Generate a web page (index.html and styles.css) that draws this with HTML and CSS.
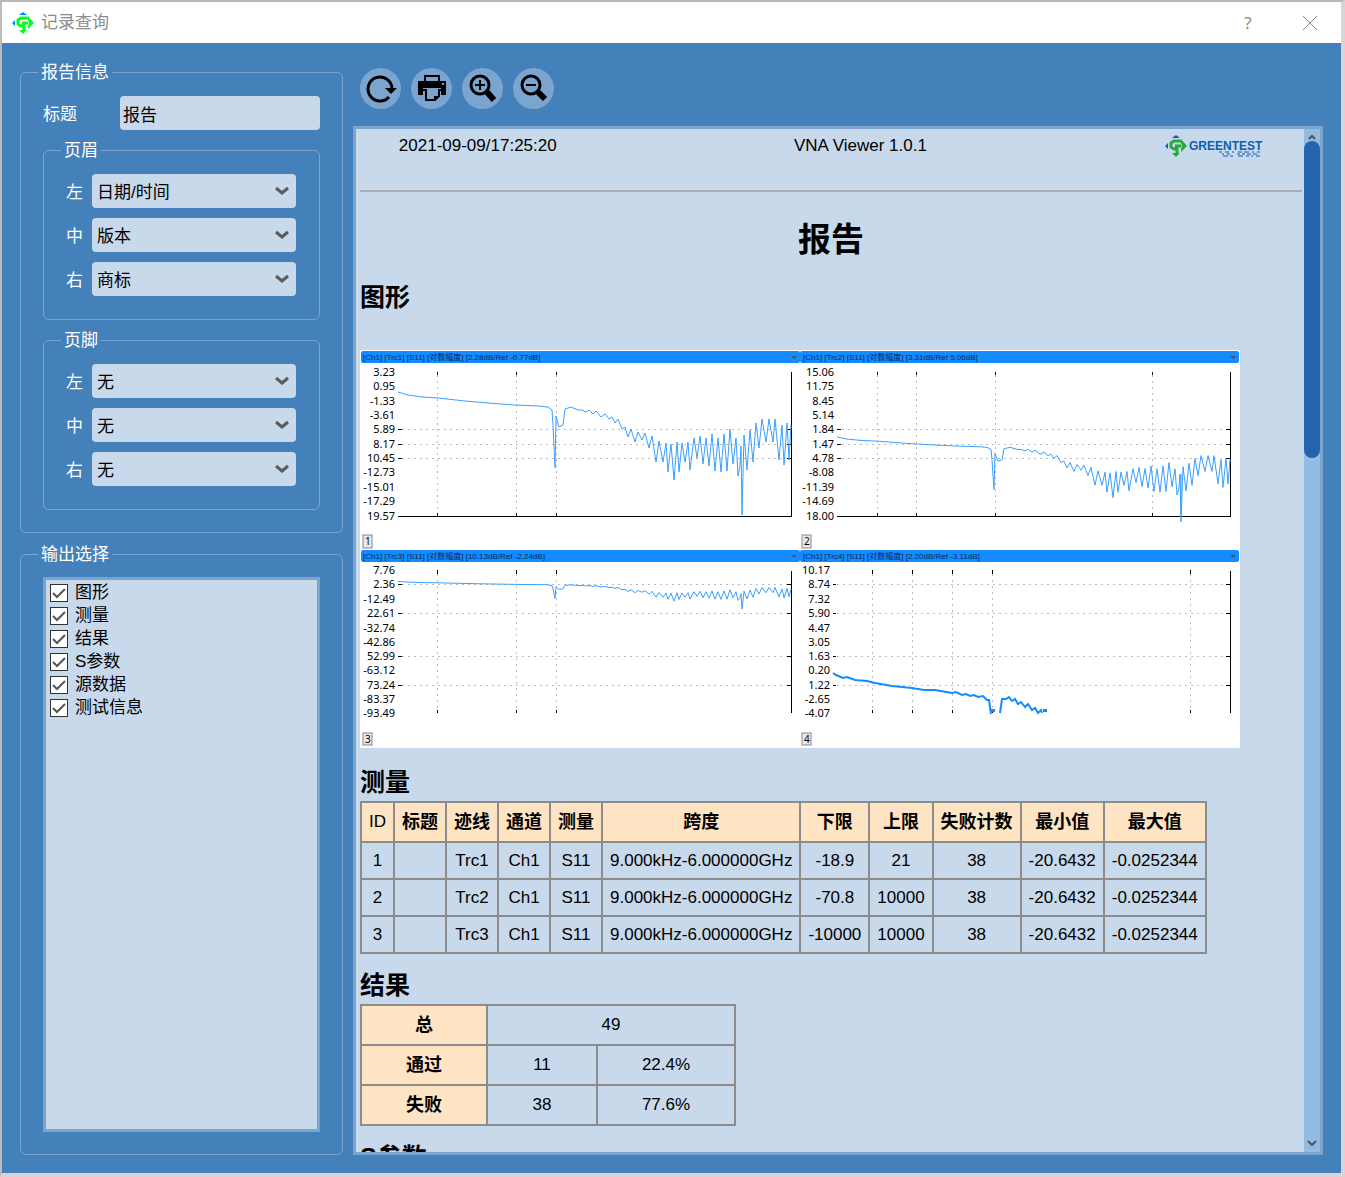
FILE: index.html
```html
<!DOCTYPE html>
<html lang="zh-CN">
<head>
<meta charset="utf-8">
<meta name="viewport" content="width=device-width, initial-scale=1">
<title>记录查询</title>
<link rel="stylesheet" href="styles.css">
</head>
<body>
<svg class="defs" aria-hidden="true">
  <defs>
    <symbol id="brand-mark" viewBox="0 0 22 22">
      <path class="brand-blue" d="M11 0l4 3H7zM0 11l3-3v6z"/>
      <path class="brand-line" d="M16 6H9L6 8v4l3 2h3v4M10 11h6"/>
      <path class="brand-green" d="M16 4l6 7-6 6v-3l1-3-1-3zM7 18h8l-4 4z"/>
    </symbol>
    <path id="trace" vector-effect="non-scaling-stroke" d="M38 42L48 45 62 47 78 48 105 51 128 53 155 55 178 56 188 57 192 60 193 75 195 118 196 66 199 77 203 75 205 59 211 57 218 60 222 60 226 62 229 60 233 64 236 61 241 67 245 64 249 69 252 67 255 73 258 69 262 79 265 77 268 87 271 79 275 92 278 82 282 90 285 83 289 98 292 86 296 112 299 91 303 112 306 93 308 122 311 94 314 130 317 92 319 122 322 93 325 112 328 92 330 120 334 88 337 108 340 86 343 114 346 88 349 116 352 84 355 121 358 88 361 122 364 84 367 121 370 79 373 114 376 88 378 126 380 116 381 96 382 165 384 85 387 120 390 80 393 112 396 73 399 98 402 69 406 92 409 69 413 92 415 69 419 110 422 75 424 115 427 73 429 110 431 75"/>
  </defs>
</svg>

<div class="window">
  <header class="titlebar">
    <svg class="titlebar-icon bright" aria-hidden="true"><use href="#brand-mark"/></svg>
    <span class="titlebar-text">记录查询</span>
    <button class="titlebar-button" type="button" aria-label="帮助">?</button>
    <button class="titlebar-button" type="button" aria-label="关闭">
      <svg width="16" height="16" viewBox="0 0 16 16"><path d="M1 1l14 14M15 1L1 15"/></svg>
    </button>
  </header>

  <main class="main">
    <form class="sidebar">
      <fieldset class="group info">
        <legend>报告信息</legend>
        <div class="title-row">
          <label for="title">标题</label>
          <input class="control" id="title" type="text" value="报告">
        </div>
        <fieldset class="group slots">
          <legend>页眉</legend>
          <div class="slot"><label for="hl">左</label><select class="control" id="hl"><option>日期/时间</option></select></div>
          <div class="slot"><label for="hc">中</label><select class="control" id="hc"><option>版本</option></select></div>
          <div class="slot"><label for="hr">右</label><select class="control" id="hr"><option>商标</option></select></div>
        </fieldset>
        <fieldset class="group slots">
          <legend>页脚</legend>
          <div class="slot"><label for="fl">左</label><select class="control" id="fl"><option>无</option></select></div>
          <div class="slot"><label for="fc">中</label><select class="control" id="fc"><option>无</option></select></div>
          <div class="slot"><label for="fr">右</label><select class="control" id="fr"><option>无</option></select></div>
        </fieldset>
      </fieldset>

      <fieldset class="group output">
        <legend>输出选择</legend>
        <div class="checklist">
          <label><input type="checkbox" checked>图形</label>
          <label><input type="checkbox" checked>测量</label>
          <label><input type="checkbox" checked>结果</label>
          <label><input type="checkbox" checked>S参数</label>
          <label><input type="checkbox" checked>源数据</label>
          <label><input type="checkbox" checked>测试信息</label>
        </div>
      </fieldset>
    </form>

    <section class="preview">
      <div class="toolbar">
        <button class="tool" type="button" aria-label="刷新">
          <svg viewBox="0 0 41 41"><path class="ring" d="M29 29A12 12 0 1 1 32 20"/><path d="M25 20h12l-6 6z"/></svg>
        </button>
        <button class="tool" type="button" aria-label="打印">
          <svg viewBox="0 0 41 41"><path class="thin" d="M14 14V8h14v6"/><path d="M7 13h28v14h-5v-7H12v7H7z"/><path class="thin" d="M12 22h3v10h9l4-4v-6h3"/><path d="M23 33v-5h6z"/><path class="pale" d="M31 15h2v2h-2z"/></svg>
        </button>
        <button class="tool" type="button" aria-label="放大">
          <svg viewBox="0 0 41 41"><circle class="ring" cx="18" cy="17" r="9"/><path class="cross" d="M13 17h10M18 12v10"/><path class="handle" d="M25 24l7 8"/></svg>
        </button>
        <button class="tool" type="button" aria-label="缩小">
          <svg viewBox="0 0 41 41"><circle class="ring" cx="18" cy="17" r="9"/><path class="cross" d="M13 17h10"/><path class="handle" d="M25 24l7 7"/></svg>
        </button>
      </div>

      <div class="report-frame">
        <article class="report">
          <header class="report-head">
            <span>2021-09-09/17:25:20</span>
            <span>VNA Viewer 1.0.1</span>
            <svg class="logo" width="98" height="24" viewBox="0 0 98 24" role="img" aria-label="GREENTEST">
              <use href="#brand-mark" x="0" y="1" width="22" height="22"/>
              <text class="logo-text" x="24" y="16">GREENTEST</text>
              <path class="logo-sub" d="M54 18h3M60 18h4M67 18h2M73 18h4M79 18h5M87 18h2M92 18h3M57 20h2M62 20h3M72 20h3M77 20h3M82 20h4M88 20h4M58 22h5M65 22h3M73 22h5M81 22h3M86 22h2M91 22h4"/>
            </svg>
          </header>
          <h1>报告</h1>
          <h2>图形</h2>
          <div class="charts">
            <svg class="chart" viewBox="0 0 440 199" role="img" aria-label="Trc1">
              <rect class="bar" x="1" y="1" width="439" height="12" rx="2"/>
              <text class="caption" x="3" y="10">[Ch1] [Trc1] [S11] [对数幅度] [2.28dB/Ref -0.77dB]</text>
              <path class="menu" d="M431 6h6l-3 3z"/>
              <path class="grid" d="M77 25V164M156 25V164M196 25V164M42 79H428M42 94H428M42 108H428"/>
              <path class="axis" d="M38 166H431M431 22V167M77 22v3M156 22v3M196 22v3M77 163v3M156 163v3M196 163v3M38 79h4M38 94h4M38 108h4M427 79h4M427 94h4M427 108h4"/>
              <text class="scale"><tspan x="35" y="26">3.23</tspan><tspan x="35" y="40">0.95</tspan><tspan x="35" y="55">-1.33</tspan><tspan x="35" y="69">-3.61</tspan><tspan x="35" y="83">5.89</tspan><tspan x="35" y="98">8.17</tspan><tspan x="35" y="112">10.45</tspan><tspan x="35" y="126">-12.73</tspan><tspan x="35" y="141">-15.01</tspan><tspan x="35" y="155">-17.29</tspan><tspan x="35" y="170">19.57</tspan></text>
              <use class="trace" href="#trace"/>
              <rect class="tag" x="3" y="185" width="9" height="13"/><text class="tag-text" x="5" y="195">1</text>
            </svg>
            <svg class="chart" viewBox="0 0 440 199" role="img" aria-label="Trc2">
              <rect class="bar" x="0" y="1" width="439" height="12" rx="2"/>
              <text class="caption" x="3" y="10">[Ch1] [Trc2] [S11] [对数幅度] [3.31dB/Ref 5.06dB]</text>
              <path class="menu" d="M430 6h6l-3 3z"/>
              <path class="grid" d="M77 25V164M116 25V164M195 25V164M352 25V164M42 79H428M42 94H428M42 108H428"/>
              <path class="axis" d="M37 166H430M430 22V167M77 22v3M116 22v3M195 22v3M352 22v3M77 163v3M116 163v3M195 163v3M352 163v3M37 79h4M37 94h4M37 108h4M426 79h4M426 94h4M426 108h4"/>
              <text class="scale"><tspan x="34" y="26">15.06</tspan><tspan x="34" y="40">11.75</tspan><tspan x="34" y="55">8.45</tspan><tspan x="34" y="69">5.14</tspan><tspan x="34" y="83">1.84</tspan><tspan x="34" y="98">1.47</tspan><tspan x="34" y="112">4.78</tspan><tspan x="34" y="126">-8.08</tspan><tspan x="34" y="141">-11.39</tspan><tspan x="34" y="155">-14.69</tspan><tspan x="34" y="170">18.00</tspan></text>
              <use class="trace" href="#trace" transform="translate(-1 58) scale(1 .69)"/>
              <path class="trace" d="M381 124V165"/>
              <rect class="tag" x="2" y="185" width="9" height="13"/><text class="tag-text" x="4" y="195">2</text>
            </svg>
            <svg class="chart" viewBox="0 0 440 199" role="img" aria-label="Trc3">
              <rect class="bar" x="1" y="1" width="439" height="12" rx="2"/>
              <text class="caption" x="3" y="10">[Ch1] [Trc3] [S11] [对数幅度] [10.13dB/Ref -2.24dB]</text>
              <path class="menu" d="M431 6h6l-3 3z"/>
              <path class="grid" d="M77 25V164M156 25V164M196 25V164M42 35H428M42 64H428M42 107H428M42 136H428"/>
              <path class="axis" d="M431 22V164M77 21v4M156 21v4M196 21v4M77 161v3M156 161v3M196 161v3M38 35h4M38 64h4M38 107h4M38 136h4M427 35h4M427 64h4M427 107h4M427 136h4"/>
              <text class="scale"><tspan x="35" y="25">7.76</tspan><tspan x="35" y="39">2.36</tspan><tspan x="35" y="54">-12.49</tspan><tspan x="35" y="68">22.61</tspan><tspan x="35" y="83">-32.74</tspan><tspan x="35" y="97">-42.86</tspan><tspan x="35" y="111">52.99</tspan><tspan x="35" y="125">-63.12</tspan><tspan x="35" y="140">73.24</tspan><tspan x="35" y="154">-83.37</tspan><tspan x="35" y="168">-93.49</tspan></text>
              <use class="trace" href="#trace" transform="translate(0 23) scale(1 .225)"/>
              <rect class="tag" x="3" y="184" width="9" height="12"/><text class="tag-text" x="5" y="194">3</text>
            </svg>
            <svg class="chart" viewBox="0 0 440 199" role="img" aria-label="Trc4">
              <rect class="bar" x="0" y="1" width="439" height="12" rx="2"/>
              <text class="caption" x="3" y="10">[Ch1] [Trc4] [S11] [对数幅度] [2.20dB/Ref -3.11dB]</text>
              <path class="menu" d="M430 6h6l-3 3z"/>
              <path class="grid" d="M72 25V164M112 25V164M152 25V164M192 25V164M390 25V164M37 35H427M37 64H427M37 107H427M37 136H427"/>
              <path class="axis" d="M430 22V164M72 21v4M112 21v4M152 21v4M192 21v4M390 21v4M72 161v3M112 161v3M152 161v3M192 161v3M390 161v3M33 35h3M33 64h3M33 107h3M33 136h3M426 35h4M426 64h4M426 107h4M426 136h4"/>
              <text class="scale"><tspan x="30" y="25">10.17</tspan><tspan x="30" y="39">8.74</tspan><tspan x="30" y="54">7.32</tspan><tspan x="30" y="68">5.90</tspan><tspan x="30" y="83">4.47</tspan><tspan x="30" y="97">3.05</tspan><tspan x="30" y="111">1.63</tspan><tspan x="30" y="125">0.20</tspan><tspan x="30" y="140">1.22</tspan><tspan x="30" y="154">-2.65</tspan><tspan x="30" y="168">-4.07</tspan></text>
              <path class="trace bold" d="M33 124l3 2 7 3 4-1 8 3 12 1 8 2 17 3 20 2 12 2 11 0 17 3 4-1 6 3 4-1 4 2 4-1 4 2 5-1 4 4 2 0 2 14M192 163v-2h2v2M200 164l2-14 4 0 3-2 3 4 3-2 3 5 3-2 4 5 3-3 4 6 3-2 3 5 3-3 1 3M244 163v-2h2v2"/>
              <rect class="tag" x="2" y="184" width="9" height="12"/><text class="tag-text" x="4" y="194">4</text>
            </svg>
          </div>

          <h2>测量</h2>
          <table class="data">
            <thead>
              <tr><th class="latin" scope="col">ID</th><th scope="col">标题</th><th scope="col">迹线</th><th scope="col">通道</th><th scope="col">测量</th><th scope="col">跨度</th><th scope="col">下限</th><th scope="col">上限</th><th scope="col">失败计数</th><th scope="col">最小值</th><th scope="col">最大值</th></tr>
            </thead>
            <tbody>
              <tr><td>1</td><td></td><td>Trc1</td><td>Ch1</td><td>S11</td><td>9.000kHz-6.000000GHz</td><td>-18.9</td><td>21</td><td>38</td><td>-20.6432</td><td>-0.0252344</td></tr>
              <tr><td>2</td><td></td><td>Trc2</td><td>Ch1</td><td>S11</td><td>9.000kHz-6.000000GHz</td><td>-70.8</td><td>10000</td><td>38</td><td>-20.6432</td><td>-0.0252344</td></tr>
              <tr><td>3</td><td></td><td>Trc3</td><td>Ch1</td><td>S11</td><td>9.000kHz-6.000000GHz</td><td>-10000</td><td>10000</td><td>38</td><td>-20.6432</td><td>-0.0252344</td></tr>
            </tbody>
          </table>

          <h2>结果</h2>
          <table class="data summary">
            <colgroup><col class="col-name"><col class="col-count"><col class="col-share"></colgroup>
            <tbody>
              <tr><th scope="row">总</th><td colspan="2">49</td></tr>
              <tr><th scope="row">通过</th><td>11</td><td>22.4%</td></tr>
              <tr><th scope="row">失败</th><td>38</td><td>77.6%</td></tr>
            </tbody>
          </table>

          <h2>S参数</h2>
        </article>
        <div class="scrollbar" aria-hidden="true">
          <svg width="16" height="12" viewBox="0 0 16 12"><path d="M5 10l3-3 3 3"/></svg>
          <div class="thumb"></div>
          <svg class="down" width="16" height="16" viewBox="0 0 16 16"><path d="M4 5l4 4 4-4"/></svg>
        </div>
      </div>
    </section>
  </main>
</div>
</body>
</html>
```
FILE: styles.css
```css
:root {
  --blue: #4480ba;
  --pale: #c8d9eb;
  --edge: #7ba5cf;
  --cell-head: #ffe4c4;
  --rule: #8c8c8c;
}

* { box-sizing: border-box; }

body {
  margin: 0;
  font: 17px/20px "Liberation Sans", "Noto Sans CJK SC", sans-serif;
  color: #000;
}

.defs { position: absolute; width: 0; height: 0; }

.window {
  display: flex;
  flex-direction: column;
  height: 100vh;
  min-height: 800px;
  border: solid;
  border-width: 2px 4px 4px 2px;
  border-color: #b8b8b8 #d6d6d6 #d6d6d6 #bcbcbc;
  background: var(--blue);
}

/* Title bar */
.titlebar {
  display: flex;
  align-items: center;
  flex: none;
  height: 41px;
  padding-left: 10px;
  background: #fff;
  color: #8c8c8c;
}
.titlebar-icon { width: 22px; height: 22px; margin-right: 7px; }
.titlebar-text { margin-right: auto; }
.titlebar-button {
  display: grid;
  place-items: center;
  width: 62px;
  height: 41px;
  padding: 0;
  border: 0;
  background: none;
  font: 17px "Noto Sans", sans-serif;
  color: #8c8c8c;
}
.titlebar-button svg { fill: none; stroke: #8c8c8c; }

.brand-blue { fill: #0a5fb4; }
.brand-green { fill: #22ac38; }
.brand-line { fill: none; stroke: #22ac38; stroke-width: 3; }
.bright { filter: saturate(1.4) brightness(1.4); }

/* Layout */
.main {
  display: grid;
  grid-template-columns: 323px minmax(0, 1fr);
  gap: 10px;
  flex: 1;
  min-height: 0;
  padding: 18px;
}
.sidebar { display: flex; flex-direction: column; gap: 10px; min-height: 0; }

.group {
  display: flex;
  flex-direction: column;
  min-width: 0;
  margin: 0;
  border: 1px solid var(--edge);
  border-radius: 6px;
  color: #fff;
}
.group legend { margin-left: -5px; padding: 2px 3px 0; line-height: 20px; }
.info { gap: 9px; padding: 13px 22px 22px; }
.slots { gap: 10px; padding: 13px 23px 23px 22px; }

.title-row { display: grid; grid-template-columns: 77px 1fr; align-items: center; }
.slot { display: grid; grid-template-columns: 26px 1fr; align-items: center; }
.title-row label, .slot label { padding-top: 3px; }

.control {
  width: 100%;
  height: 34px;
  padding: 0 3px;
  border: 0;
  border-radius: 4px;
  background-color: var(--pale);
  font: inherit;
  color: #000;
}
select.control {
  appearance: none;
  padding: 3px 28px 0 5px;
  background-image: url("data:image/svg+xml,%3Csvg xmlns='http://www.w3.org/2000/svg' width='14' height='10'%3E%3Cpath d='M1 2l6 5 6-5' fill='none' stroke='%235a5a5a' stroke-width='3'/%3E%3C/svg%3E");
  background-repeat: no-repeat;
  background-position: right 7px center;
}

.output { flex: 1; min-height: 0; padding: 12px 22px 22px; }
.checklist {
  display: flex;
  flex-direction: column;
  flex: 1;
  padding: 1px 4px;
  border: 3px solid var(--edge);
  background: var(--pale);
  color: #000;
}
.checklist label { display: flex; align-items: center; gap: 7px; height: 23px; padding-top: 1px; }
.checklist input {
  appearance: none;
  width: 18px;
  height: 18px;
  margin: 0;
  border: 1px solid #333;
  background: #fff;
}
.checklist input:checked {
  background: #fff url("data:image/svg+xml,%3Csvg xmlns='http://www.w3.org/2000/svg' width='14' height='14'%3E%3Cpath d='M1 7l4 4 8-8' fill='none' stroke='%23555' stroke-width='2'/%3E%3C/svg%3E") center no-repeat;
}

/* Toolbar */
.preview { display: flex; flex-direction: column; gap: 17px; min-height: 0; }
.toolbar { display: flex; gap: 10px; padding: 7px 0 0 7px; }
.tool {
  width: 41px;
  height: 41px;
  padding: 0;
  border: 0;
  border-radius: 50%;
  background: #7ba5cf;
}
.tool svg { display: block; }
.ring { fill: none; stroke: #000; stroke-width: 3; }
.cross { stroke: #000; stroke-width: 2; }
.handle { stroke: #000; stroke-width: 6; }
.thin { fill: #7ba5cf; stroke: #000; stroke-width: 2; }
.pale { fill: #7ba5cf; }

/* Report */
.report-frame {
  display: flex;
  flex: 1;
  min-height: 0;
  border: 3px solid var(--edge);
  background: var(--pale);
}
.report {
  flex: 1;
  min-width: 0;
  padding: 5px 2px 5px 4px;
  overflow: auto;
  scrollbar-width: none;
}
.report-head {
  display: grid;
  grid-template-columns: 4fr 9fr 3fr;
  justify-items: center;
  height: 58px;
  border-bottom: 2px solid #a9adb2;
  line-height: 24px;
}
.logo-text { font: bold 12px "Liberation Sans", sans-serif; fill: #0a5fb4; }
.logo-sub { stroke: #0a5fb4; stroke-width: 1; }

h1, h2 { font-family: "Liberation Sans", "Noto Sans CJK SC", sans-serif; }
h1 { margin: 28px 0 21px; font-size: 33px; line-height: 40px; text-align: center; }
h2 { margin: 15px 0 3px; font-size: 25px; line-height: 32px; }

.charts {
  display: grid;
  grid-template-columns: 440px 440px;
  width: 880px;
  margin: 37px 0 18px;
  background: #fff;
}
.chart { display: block; width: 440px; height: 199px; }
.bar { fill: #148cff; }
.caption { font: 8px "Liberation Sans", "Noto Sans CJK SC", sans-serif; fill: #002a5c; }
.menu { fill: #555; }
.grid { fill: none; stroke: #bbb; stroke-dasharray: 2 4; shape-rendering: crispEdges; }
.axis { fill: none; stroke: #000; shape-rendering: crispEdges; }
.scale { font: 11px "Noto Sans", sans-serif; text-anchor: end; }
.trace { fill: none; stroke: #3b9fff; stroke-width: 1; }
.trace.bold { stroke: #148cff; stroke-width: 2; }
.tag { fill: #e8e8e8; stroke: #888; }
.tag-text { font: 10px "Noto Sans", sans-serif; }

.data { border-collapse: collapse; }
.data th, .data td {
  padding: 7px;
  border: 2px solid var(--rule);
  line-height: 21px;
  text-align: center;
  white-space: nowrap;
}
.data th { background: var(--cell-head); font-size: 18px; line-height: 24px; }
.data th.latin { font-size: 17px; font-weight: normal; }
.summary { table-layout: fixed; width: 376px; }
.data.summary td { line-height: 24px; }
.col-name { width: 126px; }
.col-count { width: 110px; }

/* Scroll bar */
.scrollbar {
  display: flex;
  flex-direction: column;
  flex: none;
  width: 16px;
  background: #92bce3;
}
.scrollbar svg { fill: none; stroke: #555; stroke-width: 2; flex: none; }
.scrollbar .down { margin-top: auto; }
.thumb { height: 31%; border-radius: 8px; background: #2464ad; }
```
